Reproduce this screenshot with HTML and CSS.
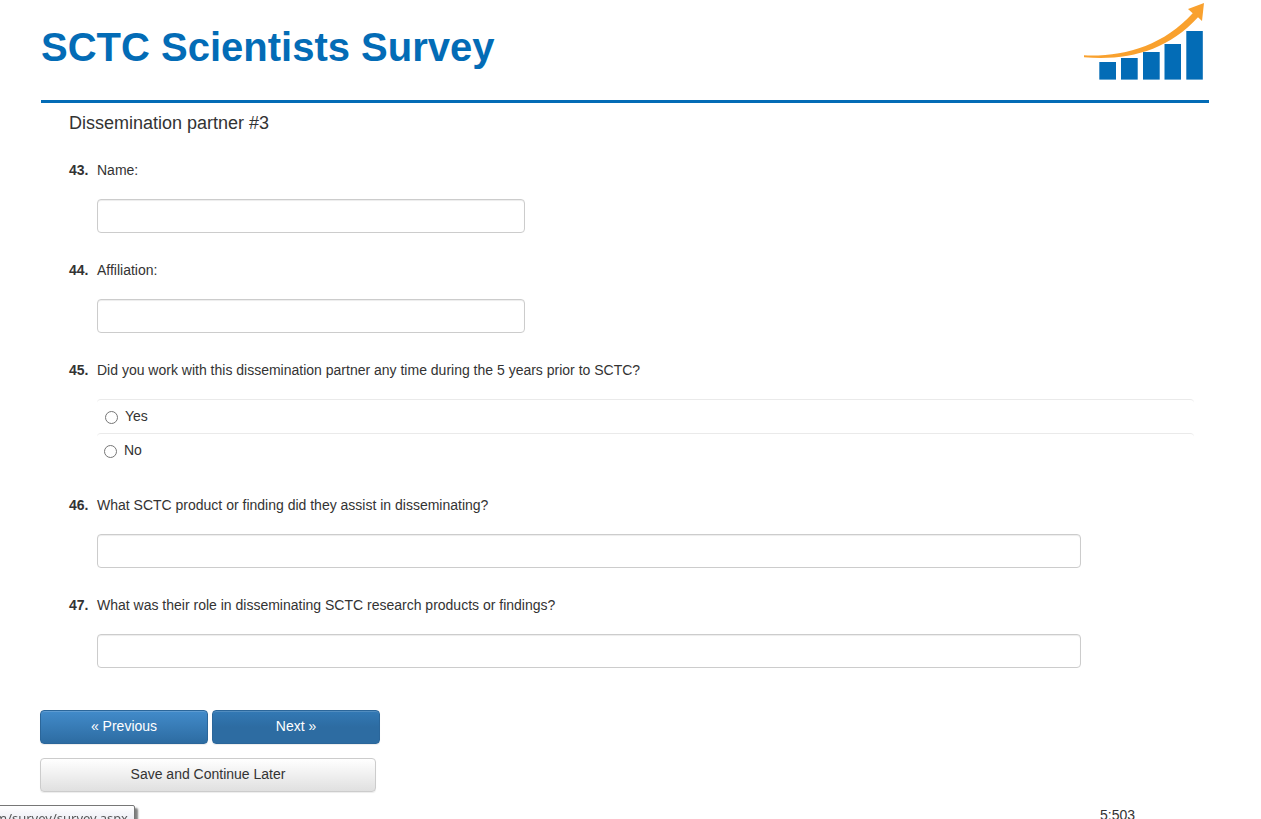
FILE: index.html
```
<!DOCTYPE html>
<html lang="en">
<head>
  <meta charset="UTF-8" />
  <meta name="viewport" content="width=device-width, initial-scale=1.0"/>
  <title>SCTC Scientists Survey</title>
  <link rel="stylesheet" href="styles.css">
</head>
<body>
  <header class="survey-header">
    <h1>SCTC Scientists Survey</h1>
    <svg class="logo" width="122" height="80" viewBox="0 0 122 80" aria-hidden="true">
      <g fill="#036cb6">
        <rect x="16.3" y="62" width="16.7" height="17.6"/>
        <rect x="38" y="58" width="16.7" height="21.6"/>
        <rect x="60" y="52" width="16.7" height="27.6"/>
        <rect x="81.5" y="44" width="16.5" height="35.6"/>
        <rect x="103.3" y="31" width="16.5" height="48.6"/>
      </g>
      <path fill="#f9a12e" d="M1 55.3 C40 57 80 46 109.7 13.2 L105 9 L121 3 L119 21 L115 17.2 C84 51 44 61 1 57.2 Z"/>
    </svg>
  </header>

  <form class="survey" action="#">
    <main class="questions">
      <h2>Dissemination partner #3</h2>

      <div class="question">
        <span class="number">43.</span>
        <label for="q43">Name:</label>
        <input type="text" id="q43" class="text-box short">
      </div>

      <div class="question">
        <span class="number">44.</span>
        <label for="q44">Affiliation:</label>
        <input type="text" id="q44" class="text-box short">
      </div>

      <fieldset class="question choice-question">
        <legend><span class="number">45.</span>Did you work with this dissemination partner any time during the 5 years prior to SCTC?</legend>
        <div class="choices">
          <label class="choice"><input type="radio" name="q45" value="yes">Yes</label>
          <label class="choice"><input type="radio" name="q45" value="no">No</label>
        </div>
      </fieldset>

      <div class="question">
        <span class="number">46.</span>
        <label for="q46">What SCTC product or finding did they assist in disseminating?</label>
        <input type="text" id="q46" class="text-box">
      </div>

      <div class="question">
        <span class="number">47.</span>
        <label for="q47">What was their role in disseminating SCTC research products or findings?</label>
        <input type="text" id="q47" class="text-box">
      </div>
    </main>

    <div class="actions">
      <div class="nav-buttons">
        <button type="button" class="btn btn-primary">« Previous</button>
        <button type="button" class="btn btn-primary btn-active">Next »</button>
      </div>
      <button type="button" class="btn btn-default">Save and Continue Later</button>
    </div>
  </form>

  <footer class="survey-footer">5:503</footer>

  <!-- Link status bubble -->
  <div class="status-bubble">m/survey/survey.aspx</div>
</body>
</html>
```

FILE: styles.css
```
* {
  box-sizing: border-box;
}
html {
  height: 100%;
  overflow: hidden;
}
body {
  margin: 0;
  padding: 0 52px 0 40px;
  height: 100%;
  font-family: "Liberation Sans", Arial, sans-serif;
  font-size: 14px;
  line-height: 20px;
  color: #333;
  background: #fff;
}

/* Header */
.survey-header {
  display: flex;
  justify-content: space-between;
  align-items: flex-start;
  margin-left: 1px;
  padding-right: 4px;
  height: 103px;
  border-bottom: 3px solid #036cb6;
}
.survey-header h1 {
  margin: 0;
  padding-top: 23px;
  font-size: 40px;
  line-height: 48px;
  color: #036cb6;
}
.logo {
  flex: none;
}

/* Questions */
.questions {
  padding: 10px 15px 0 29px;
}
.questions h2 {
  margin: 0 0 27px;
  font-size: 18px;
  font-weight: normal;
  line-height: 20px;
}
.question {
  display: grid;
  grid-template-columns: 28px 1fr;
  row-gap: 19px;
  margin: 0 0 27px;
}
.number {
  font-weight: bold;
}
.text-box {
  grid-column: 2;
  width: 100%;
  max-width: 984px;
  height: 34px;
  padding: 6px 12px;
  font: inherit;
  color: #555;
  background: #fff;
  border: 1px solid #ccc;
  border-radius: 4px;
  box-shadow: inset 0 1px 1px rgba(0, 0, 0, 0.075);
}
.text-box.short {
  max-width: 428px;
}
.choice-question {
  display: block;
  min-width: 0;
  margin-bottom: 28px;
  padding: 0;
  border: none;
}
.choice-question legend {
  display: flex;
  padding: 0;
}
.choice-question .number {
  width: 28px;
}
.choices {
  margin: 19px 0 0 28px;
}
.choice {
  display: flex;
  align-items: flex-start;
  gap: 7px;
  height: 34px;
  padding: 6px 0 0 8px;
  border-top: 1px solid #eaeaea;
  border-radius: 4px;
}
.choice + .choice {
  padding-left: 7px;
}
.choice input {
  width: 13px;
  height: 13px;
  margin: 5px 0 0;
}

/* Buttons */
.actions {
  display: flex;
  flex-direction: column;
  align-items: flex-start;
  gap: 14px;
  padding-top: 15px;
}
.nav-buttons {
  display: flex;
  gap: 4px;
}
.btn {
  width: 168px;
  height: 34px;
  padding: 0 12px 2px;
  font: inherit;
  border: 1px solid #2b669a;
  border-radius: 4px;
  cursor: pointer;
}
.btn-primary {
  color: #fff;
  background: linear-gradient(#428bca, #2d6ca2);
  box-shadow: inset 0 1px 0 rgba(255, 255, 255, 0.15), 0 1px 1px rgba(0, 0, 0, 0.075);
}
.btn-active {
  background: linear-gradient(#3379b5, #2d6ca2 50%);
}
.btn-default {
  width: 336px;
  color: #333;
  background: linear-gradient(#fff, #e0e0e0);
  border-color: #ccc;
  box-shadow: inset 0 1px 0 rgba(255, 255, 255, 0.15), 0 1px 1px rgba(0, 0, 0, 0.075);
}

/* Footer */
.survey-footer {
  padding: 13px 74px 0 0;
  text-align: right;
}
.status-bubble {
  position: fixed;
  left: -12px;
  bottom: -8px;
  height: 22px;
  padding: 3px 6px 0;
  font-family: "Noto Sans", sans-serif;
  font-size: 13px;
  line-height: 18px;
  color: #575757;
  background: linear-gradient(#fff, #e4e5f0);
  border: 1px solid #767676;
  border-radius: 2px;
  box-shadow: 3px 3px 2px rgba(0, 0, 0, 0.5);
}
```
